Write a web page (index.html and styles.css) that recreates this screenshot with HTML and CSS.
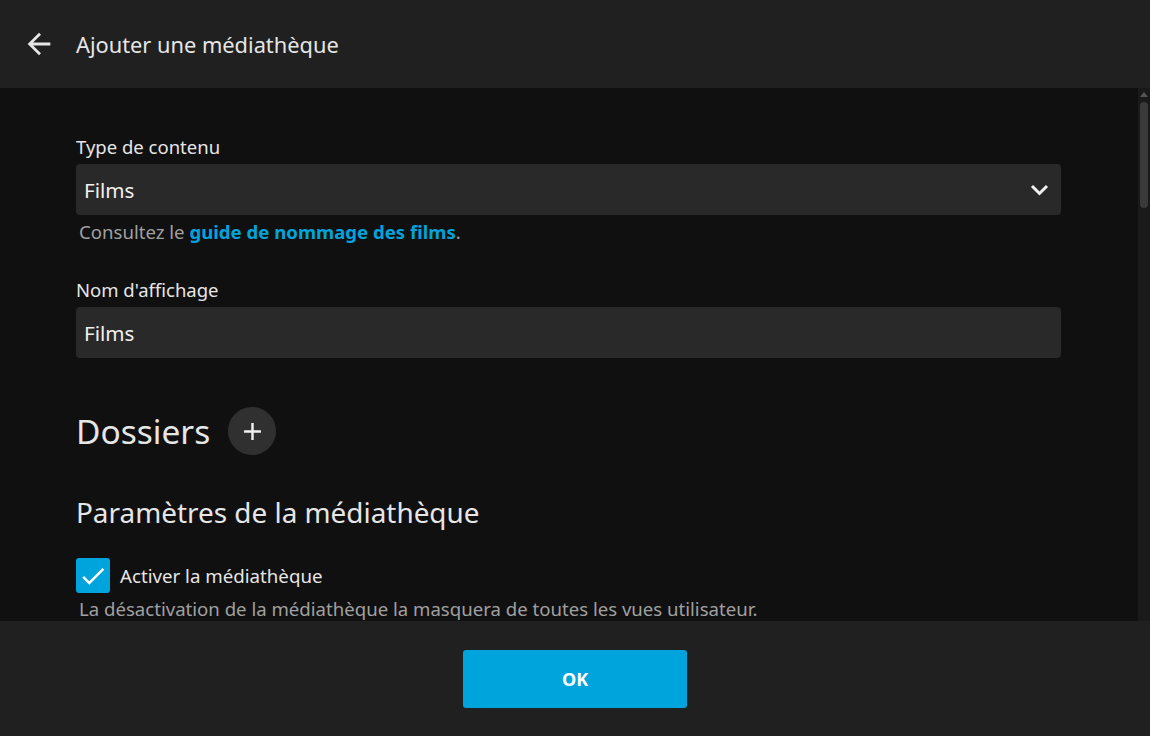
FILE: index.html
```html
<!DOCTYPE html>
<html lang="fr">
<head>
<meta charset="utf-8">
<title>Ajouter une médiathèque</title>
<link rel="stylesheet" href="styles.css">
</head>
<body>
<div class="page">
  <header class="topbar">
    <button class="back" aria-label="Retour">
      <svg width="34" height="34" viewBox="0 0 24 24"><path d="M20 11H7.83l5.59-5.59L12 4l-8 8 8 8 1.41-1.41L7.83 13H20v-2z" fill="#e6e6e6"/></svg>
    </button>
    <h2 class="title">Ajouter une médiathèque</h2>
  </header>
  <main class="body">
    <div class="scroller">
      <div class="content">
        <div class="field">
          <label class="label">Type de contenu</label>
          <div class="select">
            <span>Films</span>
            <svg class="chev" width="20" height="14" viewBox="0 0 20 14"><polyline points="2,3 9.5,10.5 17,3" fill="none" stroke="#f0f0f0" stroke-width="3"/></svg>
          </div>
          <div class="help">Consultez le <a href="#" class="link">guide de nommage des films</a>.</div>
        </div>
        <div class="field">
          <label class="label">Nom d'affichage</label>
          <div class="input">Films</div>
        </div>
        <div class="section-head">
          <h1 class="h1">Dossiers</h1>
          <button class="add" aria-label="Ajouter">
            <svg width="29" height="29" viewBox="0 0 24 24"><path d="M19 13h-6v6h-2v-6H5v-2h6V5h2v6h6v2z" fill="#f0f0f0"/></svg>
          </button>
        </div>
        <h2 class="h2">Paramètres de la médiathèque</h2>
        <div class="check-row">
          <span class="checkbox">
            <svg width="30" height="30" viewBox="0 0 24 24"><path d="M9 16.17L4.83 12l-1.42 1.41L9 19 21 7l-1.41-1.41z" fill="#fff"/></svg>
          </span>
          <span class="check-label">Activer la médiathèque</span>
        </div>
        <div class="help desc">La désactivation de la médiathèque la masquera de toutes les vues utilisateur.</div>
      </div>
    </div>
    <div class="scrollbar">
      <div class="arrow"></div>
      <div class="thumb"></div>
    </div>
  </main>
  <footer class="footer">
    <button class="ok">OK</button>
  </footer>
</div>
</body>
</html>
```
FILE: styles.css
```css
* { box-sizing: border-box; }
html, body { margin: 0; padding: 0; }
body {
  background: #101010;
  color: #e6e6e6;
  font-family: "Noto Sans", "Open Sans", sans-serif;
  width: 1150px;
  height: 736px;
  overflow: hidden;
}
.page {
  display: flex;
  flex-direction: column;
  height: 736px;
}
.topbar {
  height: 88px;
  flex: none;
  background: #202020;
  display: flex;
  align-items: center;
  padding-left: 22px;
}
.back {
  background: none;
  border: 0;
  padding: 0;
  width: 34px;
  height: 34px;
  display: flex;
  align-items: center;
  justify-content: center;
}
.title {
  margin: 0 0 0 20px;
  font-size: 21.8px;
  font-weight: 400;
  color: #e6e6e6;
}
.body {
  flex: 1;
  display: flex;
  min-height: 0;
}
.scroller {
  flex: 1;
  overflow: hidden;
}
.content {
  padding: 47px 77px 0 76px;
}
.label {
  display: block;
  font-size: 18.5px;
  color: #e6e6e6;
  line-height: 24px;
  margin-bottom: 5px;
}
.select, .input {
  height: 51px;
  background: #292929;
  border-radius: 4px;
  display: flex;
  align-items: center;
  justify-content: space-between;
  padding: 0 11px 0 8px;
  font-size: 20.6px;
  color: #f0f0f0;
}
.help {
  font-size: 18.6px;
  color: #a0a0a0;
  margin-top: 5px;
  padding-left: 3px;
  line-height: 24px;
}
.link {
  color: #00a4dc;
  font-weight: 700;
  text-decoration: none;
}
.field + .field { margin-top: 34px; }
.section-head {
  display: flex;
  align-items: center;
  margin-top: 49px;
  height: 48px;
}
.h1 {
  margin: 0;
  font-size: 33.5px;
  font-weight: 400;
  color: #e6e6e6;
}
.add {
  margin-left: 18px;
  width: 48px;
  height: 48px;
  border-radius: 50%;
  background: #303030;
  border: 0;
  display: flex;
  align-items: center;
  justify-content: center;
  padding: 0;
}
.h2 {
  margin: 37px 0 0;
  font-size: 27.9px;
  font-weight: 400;
  color: #e6e6e6;
  line-height: 40px;
}
.check-row {
  display: flex;
  align-items: center;
  margin-top: 26px;
}
.checkbox {
  width: 34px;
  height: 35px;
  background: #00a4dc;
  border-radius: 3px;
  display: flex;
  align-items: center;
  justify-content: center;
}
.check-label {
  margin-left: 10px;
  font-size: 18.7px;
  color: #e6e6e6;
}
.desc { margin-top: 4px; }
.scrollbar {
  width: 12px;
  flex: none;
  background: #1a1a1a;
  display: flex;
  flex-direction: column;
  align-items: center;
  padding-top: 4px;
}
.arrow {
  width: 0;
  height: 0;
  border-left: 4px solid transparent;
  border-right: 4px solid transparent;
  border-bottom: 5px solid #555;
}
.thumb {
  margin-top: 5px;
  width: 8px;
  height: 106px;
  background: #3a3a3a;
  border-radius: 4px;
}
.footer {
  height: 115px;
  flex: none;
  background: #202020;
  display: flex;
  justify-content: center;
  align-items: flex-start;
  padding-top: 29px;
}
.ok {
  width: 224px;
  height: 58px;
  background: #00a4dc;
  border: 0;
  border-radius: 3px;
  color: #fff;
  font-family: "Noto Sans", sans-serif;
  font-size: 18px;
  font-weight: 700;
}
```
